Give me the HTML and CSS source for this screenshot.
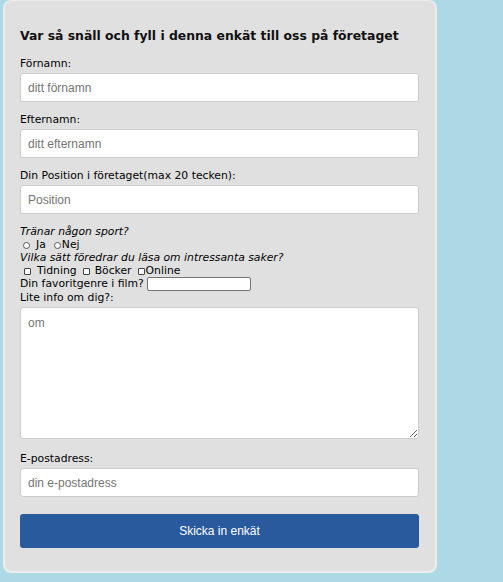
FILE: index.html
```html
<!DOCTYPE html>
<html lang="sv">
<head>
<meta charset="utf-8">
<title>Enkät</title>
<link rel="stylesheet" href="styles.css">
</head>
<body>
<form class="card">
  <h1 class="title">Var så snäll och fyll i denna enkät till oss på företaget</h1>

  <label class="lbl lbl-first">Förnamn:</label>
  <input class="field" type="text" placeholder="ditt förnamn">

  <label class="lbl">Efternamn:</label>
  <input class="field" type="text" placeholder="ditt efternamn">

  <label class="lbl">Din Position i företaget(max 20 tecken):</label>
  <input class="field" type="text" placeholder="Position">

  <div class="q q-first">Tränar någon sport?</div>
  <div class="opts">
    <input class="radio" type="radio" name="sport"><span class="opt-txt">Ja</span>
    <input class="radio radio-b" type="radio" name="sport"><span class="opt-txt">Nej</span>
  </div>
  <div class="q">Vilka sätt föredrar du läsa om intressanta saker?</div>
  <div class="opts">
    <input class="check" type="checkbox"><span class="opt-txt">Tidning</span>
    <input class="check check-b" type="checkbox"><span class="opt-txt">Böcker</span>
    <input class="check check-c" type="checkbox"><span class="opt-txt">Online</span>
  </div>
  <div class="genre">Din favoritgenre i film? <input class="mini" type="text"></div>
  <div class="plain">Lite info om dig?:</div>
  <textarea class="area" placeholder="om"></textarea>

  <label class="lbl lbl-mail">E-postadress:</label>
  <input class="field" type="email" placeholder="din e-postadress">

  <button class="submit" type="button">Skicka in enkät</button>
</form>
</body>
</html>
```

FILE: styles.css
```css
html, body {
  margin: 0;
  padding: 0;
}
body {
  background: #add8e6;
  font-family: "DejaVu Sans", Verdana, sans-serif;
  font-size: 10.8px;
  color: #000;
}
.card {
  box-sizing: border-box;
  width: 434px;
  margin-left: 3px;
  background: #e0e0e0;
  border: 2px solid #ececec;
  border-top-width: 1px;
  border-radius: 8px;
  padding: 27px 16px 23px 15px;
  display: flex;
  flex-direction: column;
}
.title {
  margin: 0;
  font-size: 12.4px;
  line-height: 16px;
  font-weight: bold;
  color: #111;
}
.lbl {
  display: block;
  line-height: 14px;
  margin-top: 11px;
  margin-bottom: 2px;
}
.lbl-first {
  margin-top: 13px;
}
.lbl-mail {
  margin-top: 13px;
}
.field {
  box-sizing: border-box;
  width: 399px;
  height: 29px;
  margin: 0;
  padding: 0 7px;
  border: 1px solid #cccccc;
  border-radius: 3px;
  background: #fff;
  font-family: "Liberation Sans", Arial, sans-serif;
  font-size: 12px;
  color: #333;
  outline: none;
}
.field::placeholder,
.area::placeholder {
  color: #757575;
}
.q {
  font-style: italic;
  line-height: 14px;
  height: 14px;
}
.q-first {
  margin-top: 11px;
}
.opts {
  display: flex;
  align-items: center;
  height: 12px;
  line-height: 12px;
}
.radio {
  appearance: none;
  -webkit-appearance: none;
  box-sizing: border-box;
  width: 7px;
  height: 7px;
  margin: 0 6px 0 3px;
  border: 1px solid #555;
  border-radius: 50%;
  background: #fff;
}
.radio-b {
  margin-left: 8px;
  margin-right: 1px;
}
.check {
  appearance: none;
  -webkit-appearance: none;
  box-sizing: border-box;
  width: 7px;
  height: 7px;
  margin: 0 6px 0 4px;
  border: 1px solid #444;
  border-radius: 1px;
  background: #fff;
}
.check-b {
  margin-left: 6px;
  margin-right: 5px;
}
.check-c {
  margin-left: 6px;
  margin-right: 1px;
}
.opt-txt {
  display: inline-block;
}
.genre {
  display: flex;
  align-items: center;
  height: 14px;
  line-height: 14px;
}
.mini {
  box-sizing: border-box;
  width: 104px;
  height: 14px;
  margin: 0 0 0 3px;
  padding: 0 2px;
  border: 1px solid #767676;
  border-radius: 2px;
  background: #fff;
  font-size: 10px;
}
.plain {
  line-height: 14px;
  height: 14px;
}
.area {
  box-sizing: border-box;
  width: 399px;
  height: 132px;
  margin: 2px 0 0 0;
  padding: 8px 7px;
  border: 1px solid #cccccc;
  border-radius: 3px;
  background: #fff;
  font-family: "Liberation Sans", Arial, sans-serif;
  font-size: 12px;
  line-height: 14px;
  resize: vertical;
  outline: none;
}
.submit {
  box-sizing: border-box;
  width: 399px;
  height: 34px;
  margin-top: 17px;
  border: none;
  border-radius: 3px;
  background: #2a5a9e;
  color: #fff;
  font-family: "Liberation Sans", Arial, sans-serif;
  font-size: 12px;
  cursor: pointer;
}
```
